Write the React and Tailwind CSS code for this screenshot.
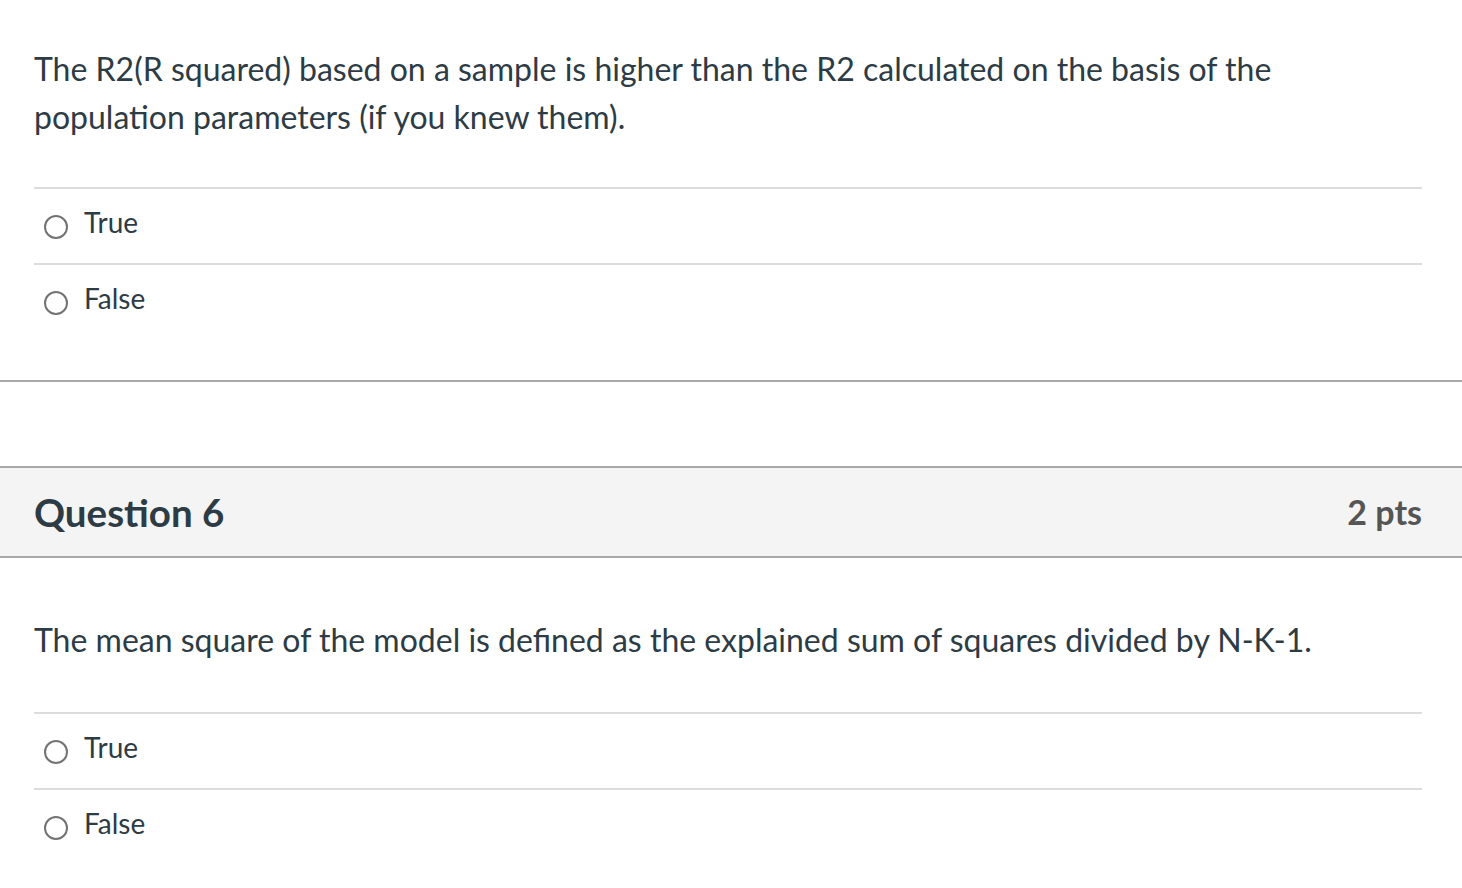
import React from "react";

function Radio() {
  return <span className="inline-block w-[24px] h-[24px] rounded-full border-2 border-[#737373] bg-white shrink-0 mt-[2px]" />;
}

function Option({ label }) {
  return (
    <div className="flex items-center h-[76px] pl-[10px] border-t-2 border-[#dcdcdc]">
      <Radio />
      <span className="ml-[16px] text-[28px] leading-none text-[#2d3b45] pb-[8px]">{label}</span>
    </div>
  );
}

export default function App() {
  return (
    <div className="w-[1462px] h-[888px] bg-white overflow-hidden" style={{ fontFamily: "Lato, 'Noto Sans', sans-serif" }}>
      <div className="pl-[34px] pr-[40px] pt-[45px]">
        <p className="text-[32px] leading-[48px] text-[#2d3b45]">
          The R2(R squared) based on a sample is higher than the R2 calculated on the basis of the population parameters (if you knew them).
        </p>
        <div className="mt-[46px]">
          <Option label="True" />
          <Option label="False" />
        </div>
      </div>
      <div className="mt-[41px] border-t-2 border-[#a9a9a9]" />
      <div className="mt-[84px] h-[92px] bg-[#f4f4f4] border-y-2 border-[#a9a9a9] flex items-center justify-between pl-[34px] pr-[40px]">
        <h2 className="text-[38.5px] font-bold text-[#2d3b45] leading-none">Question 6</h2>
        <span className="text-[34px] font-bold text-[#555555] leading-none">2 pts</span>
      </div>
      <div className="pl-[34px] pr-[40px] pt-[58px]">
        <p className="text-[32px] leading-[48px] text-[#2d3b45]">
          The mean square of the model is defined as the explained sum of squares divided by N-K-1.
        </p>
        <div className="mt-[48px]">
          <Option label="True" />
          <Option label="False" />
        </div>
      </div>
    </div>
  );
}
